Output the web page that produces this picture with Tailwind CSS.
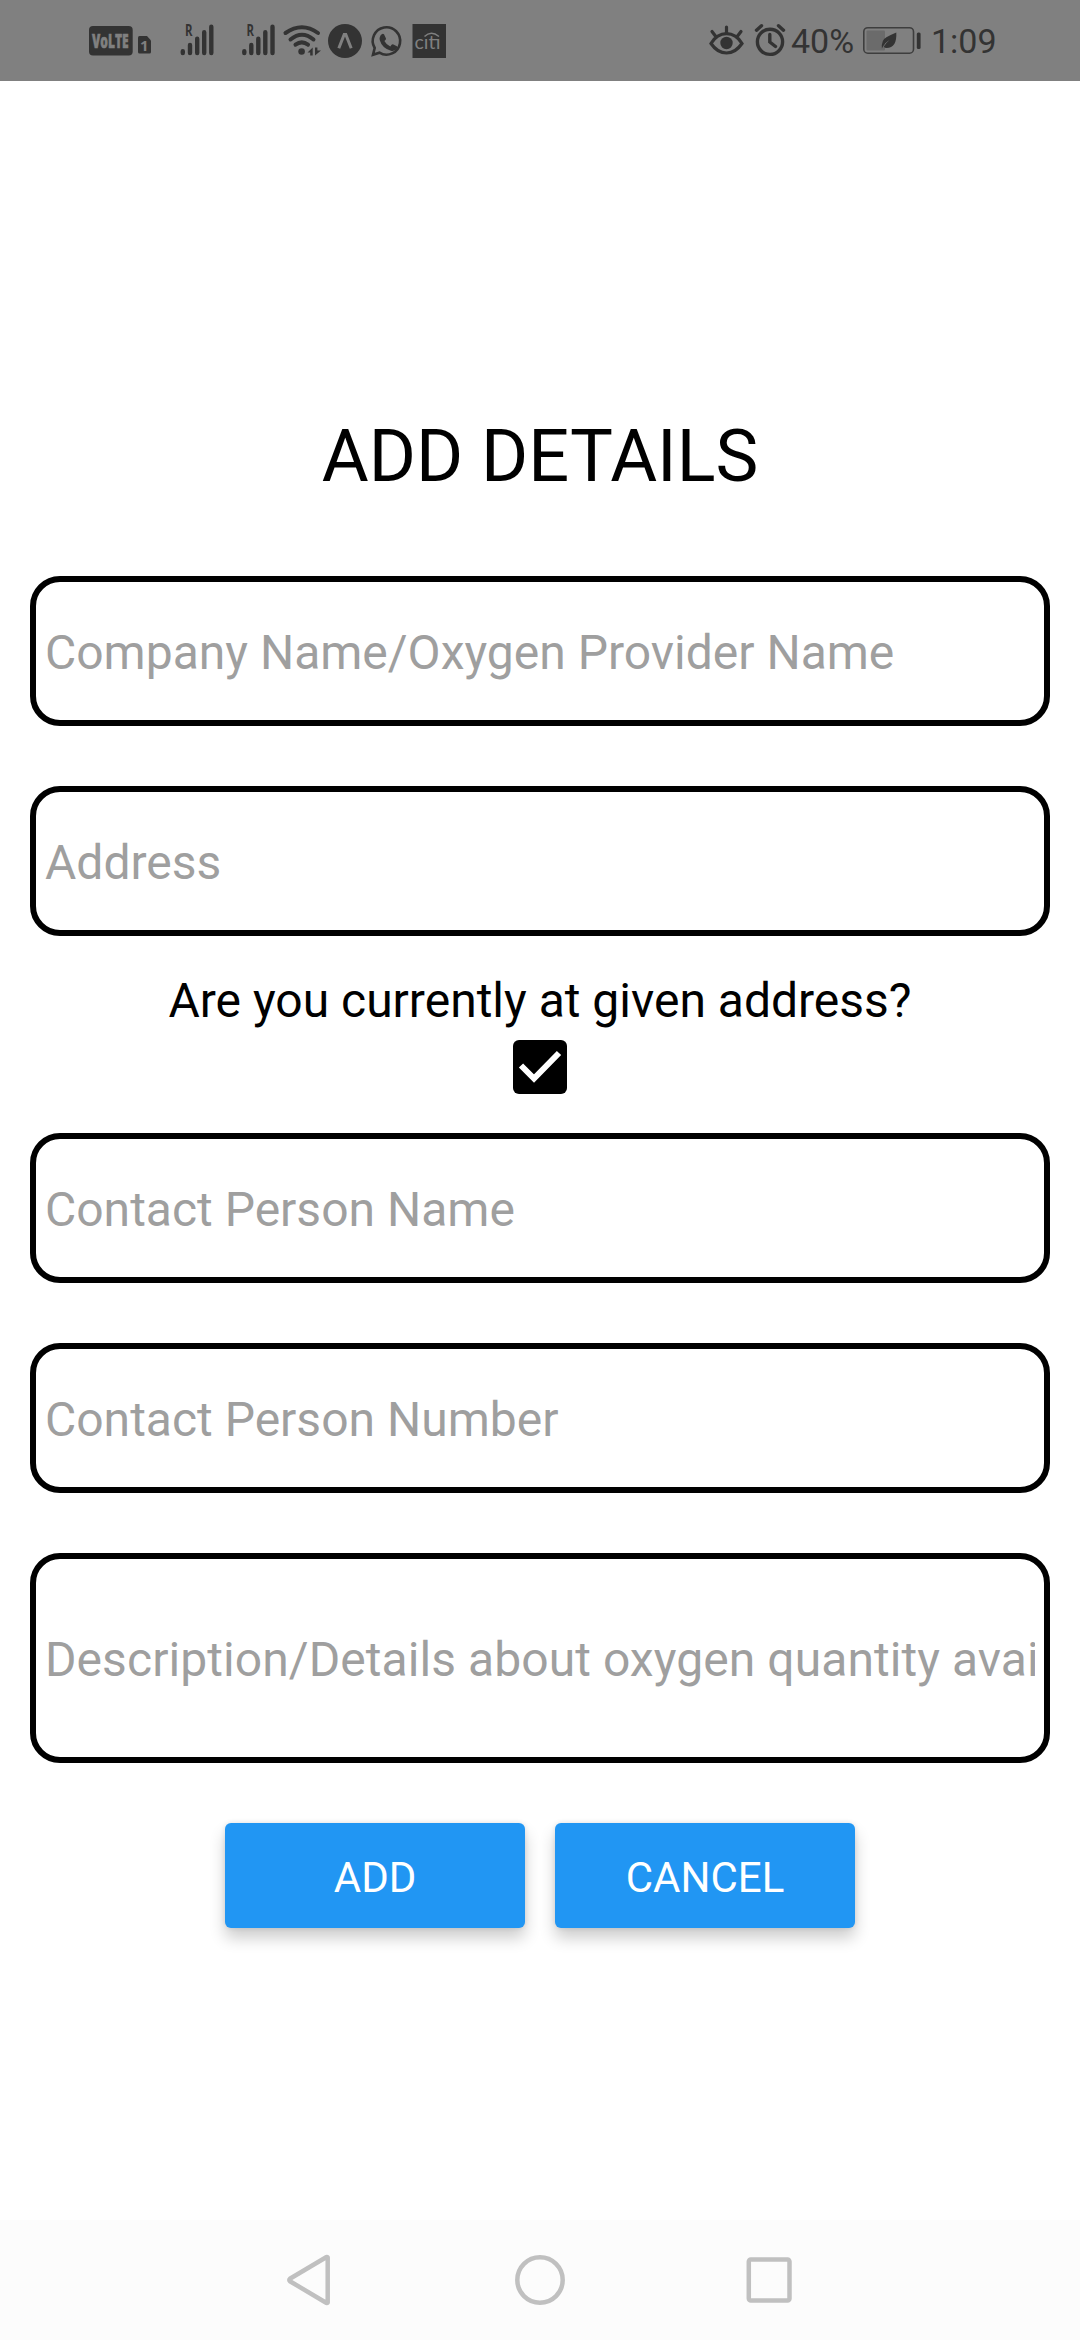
<!DOCTYPE html>
<html lang="en">
<head>
<meta charset="utf-8">
<title>Add Details</title>
<script src="https://cdn.jsdelivr.net/npm/@tailwindcss/browser@4"></script>
</head>
<body class="w-[1080px] h-[2340px] flex flex-col bg-white overflow-hidden font-['Roboto',sans-serif] text-black">

<!-- Status bar -->
<header class="h-[81px] shrink-0 bg-[#808080] text-[#333333] flex items-center justify-between pl-[88px] pr-[84px]">
  <div class="flex h-full">
    <svg class="w-[92px] h-[81px]" viewBox="88 0 92 81" fill="currentColor">
      <rect x="89" y="26" width="43.7" height="29.5" rx="4"/>
      <text transform="translate(92 48) scale(.6 1)" font-family="Open Sans" font-weight="800" font-size="20" fill="#808080" stroke="#808080" stroke-width=".6">VoLTE</text>
      <path d="M139.500 36h7.500l4 4.500v11.500q0 1.500-1.500 1.500h-10q-1.500 0-1.500-1.500v-14.500q0-1.500 1.500-1.500z"/>
      <text x="140" y="51" font-family="Open Sans" font-weight="700" font-size="15" fill="#808080">1</text>
    </svg>
    <svg class="w-[61px] h-[81px]" viewBox="180 0 61 81" fill="currentColor">
      <text x="185" y="35.500" font-family="Open Sans" font-weight="700" font-size="15.500" textLength="7.500" lengthAdjust="spacingAndGlyphs">R</text>
      <path d="M182.800 51.300v1.700M190 45v8M197.200 38.800v14.200M204.200 32.300v20.700M211.300 26.800v26.200" stroke="currentColor" stroke-width="4.400" stroke-linecap="round"/>
    </svg>
    <svg class="w-[41px] h-[81px]" viewBox="180 0 41 81" fill="currentColor">
      <text x="185.500" y="35.500" font-family="Open Sans" font-weight="700" font-size="15.500" textLength="7.500" lengthAdjust="spacingAndGlyphs">R</text>
      <path d="M183.300 51.300v1.700M190.300 45v8M197.300 38.800v14.200M204.300 32.300v20.700M211.500 26.800v26.200" stroke="currentColor" stroke-width="4.400" stroke-linecap="round"/>
    </svg>
    <svg class="w-[44px] h-[81px]" viewBox="282 0 44 81" fill="currentColor">
      <path d="M285.500 33Q302 21.500 318 33M290.500 39.500Q302 30 313.500 39.500M295.500 44.700Q301.800 40 308 44.700" fill="none" stroke="currentColor" stroke-width="4" stroke-linecap="round"/>
      <circle cx="301.600" cy="51.500" r="3.300"/>
      <path d="M307.500 52.500l5.200-5v8h-2.500v-3zM315 47.500h2.400v3h3.600l-6 5z"/>
    </svg>
    <svg class="w-[42px] h-[81px]" viewBox="326 0 42 81" fill="currentColor">
      <circle cx="345" cy="41" r="17"/>
      <path d="M338.800 48.300l5.400-13.800h1.600l5.400 13.800" fill="none" stroke="#808080" stroke-width="3"/>
    </svg>
    <svg class="w-[40px] h-[81px]" viewBox="368 0 40 81" fill="currentColor">
      <path d="M374.700 48a13.700 13.700 0 1 1 4.700 4.700L373 54.800z" fill="none" stroke="currentColor" stroke-width="2.600"/>
      <path d="M380.500 35.500q1.800-2.400 3.500-1.300l2 4.200q.3 1-1.600 2.700q2 4 5.900 5.300q1.600-2.400 2.600-2.100l4 2q.8.500.2 1.900q-1.800 3.300-5.600 2.700q-9.200-1.900-11.800-10.800q-.4-2.600.8-4.600z"/>
    </svg>
    <svg class="w-[42px] h-[81px]" viewBox="408 0 42 81" fill="currentColor">
      <rect x="412.500" y="24" width="33.500" height="34"/>
      <text x="414.500" y="49" font-family="Lato" font-size="20" textLength="26" lengthAdjust="spacingAndGlyphs" fill="#808080">cıtı</text>
      <path d="M424.500 36.500q6.500-6.500 14.500 0" fill="none" stroke="#808080" stroke-width="1.500"/>
    </svg>
  </div>

  <div class="flex h-full items-center">
    <svg class="w-[40px] h-[81px]" viewBox="708 0 40 81" fill="none" stroke="currentColor" stroke-width="3.200" stroke-linecap="round">
      <path d="M711 43.500Q717 33.700 726.500 33.700T742 43.500Q735.500 53 726.500 53T711 43.500zM726.500 27v6M712 31.500l3.800 5M741 31.500l-3.800 5"/>
      <circle cx="726.500" cy="43" r="6.200" fill="currentColor" stroke="none"/>
    </svg>
    <svg class="w-[43px] h-[81px]" viewBox="748 0 43 81" fill="none" stroke="currentColor" stroke-width="3.400" stroke-linecap="round">
      <circle cx="770" cy="41.800" r="12.600"/>
      <path d="M769.800 34.500v7.500l5.700 4.500M756.500 30.200l5-4.500M783.500 30.200l-5-4.500"/>
    </svg>
    <span class="w-[71px] text-[34px] leading-[40px] whitespace-nowrap">40%</span>
    <svg class="w-[68px] h-[81px]" viewBox="862 0 68 81" fill="currentColor">
      <rect x="863.800" y="27.700" width="49.700" height="25.500" rx="4" fill="none" stroke="currentColor" stroke-opacity=".85" stroke-width="1.600"/>
      <rect x="866.500" y="30.500" width="18.500" height="20" rx="1" fill="#6b6b6b"/>
      <path d="M896.300 32.500q.8 15.500-9.800 15.500-1.700 0-2.700-1.200 2.300-4.300 5.800-6.800-4.600 2.300-7.700 8.500-.8-8.500 4.500-11.200 3.900-2.300 9.900-4.800z"/>
      <rect x="916.800" y="32.500" width="3.800" height="16.500" rx="1.500"/>
    </svg>
    <span class="w-[66px] pl-px text-[34px] leading-[40px] whitespace-nowrap">1:09</span>
  </div>
</header>

<!-- Form -->
<main class="flex-1 flex flex-col items-center px-[30px] pt-[334px]">
  <h1 class="text-[72px] leading-[84px] mb-[77px] whitespace-nowrap">ADD DETAILS</h1>

  <input class="block w-full h-[150px] shrink-0 border-6 border-black rounded-[30px] px-[9px] pt-[2px] text-[48px] outline-none placeholder:text-[#9f9f9f] placeholder:opacity-100" placeholder="Company Name/Oxygen Provider Name">
  <input class="block w-full h-[150px] shrink-0 mt-[60px] border-6 border-black rounded-[30px] px-[9px] pt-[2px] text-[48px] outline-none placeholder:text-[#9f9f9f] placeholder:opacity-100" placeholder="Address">

  <p class="mt-[37px] text-[48px] leading-[56px] whitespace-nowrap">Are you currently at given address?</p>
  <svg class="mt-[11px] size-[54px] shrink-0" viewBox="0 0 54 54">
    <rect width="54" height="54" rx="6"/>
    <path d="M8 25.500L21 38.500L46 13" fill="none" stroke="#fff" stroke-width="6"/>
  </svg>

  <input class="block w-full h-[150px] shrink-0 mt-[39px] border-6 border-black rounded-[30px] px-[9px] pt-[2px] text-[48px] outline-none placeholder:text-[#9f9f9f] placeholder:opacity-100" placeholder="Contact Person Name">
  <input class="block w-full h-[150px] shrink-0 mt-[60px] border-6 border-black rounded-[30px] px-[9px] pt-[2px] text-[48px] outline-none placeholder:text-[#9f9f9f] placeholder:opacity-100" placeholder="Contact Person Number">
  <input class="block w-full h-[210px] shrink-0 mt-[60px] border-6 border-black rounded-[30px] px-[9px] pt-[2px] text-[48px] tracking-[0.07px] outline-none placeholder:text-[#9f9f9f] placeholder:opacity-100" placeholder="Description/Details about oxygen quantity available">

  <div class="mt-[60px] flex gap-[30px]">
    <button class="w-[300px] h-[105px] rounded-[6px] bg-[#2196f3] text-white text-[42px] pt-[4px] shadow-[0_10px_16px_rgba(0,0,0,0.2),0_0_5px_rgba(0,0,0,0.1)]">ADD</button>
    <button class="w-[300px] h-[105px] rounded-[6px] bg-[#2196f3] text-white text-[42px] pt-[4px] shadow-[0_10px_16px_rgba(0,0,0,0.2),0_0_5px_rgba(0,0,0,0.1)]">CANCEL</button>
  </div>
</main>

<!-- Navigation bar -->
<nav class="h-[120px] shrink-0 bg-[#fcfcfc] flex items-center justify-between pl-[284px] pr-[284px]">
  <svg class="w-[50px] h-[60px]" viewBox="284 2250 50 60" fill="none" stroke="#c0c0c0" stroke-width="4.500" stroke-linejoin="round"><path d="M327.700 2257.500v45q-.8 1-2 0l-35.800-21.300q-1.200-1.200 0-2.400l35.800-21.300q1.200-1 2 0z"/></svg>
  <svg class="w-[60px] h-[60px]" viewBox="510 2250 60 60" fill="none" stroke="#c0c0c0" stroke-width="4.500"><circle cx="540" cy="2280" r="22.700"/></svg>
  <svg class="w-[50px] h-[60px]" viewBox="746 2250 50 60" fill="none" stroke="#c0c0c0" stroke-width="4.500"><rect x="748.800" y="2259.500" width="40.700" height="41" rx="2"/></svg>
</nav>
</body>
</html>
